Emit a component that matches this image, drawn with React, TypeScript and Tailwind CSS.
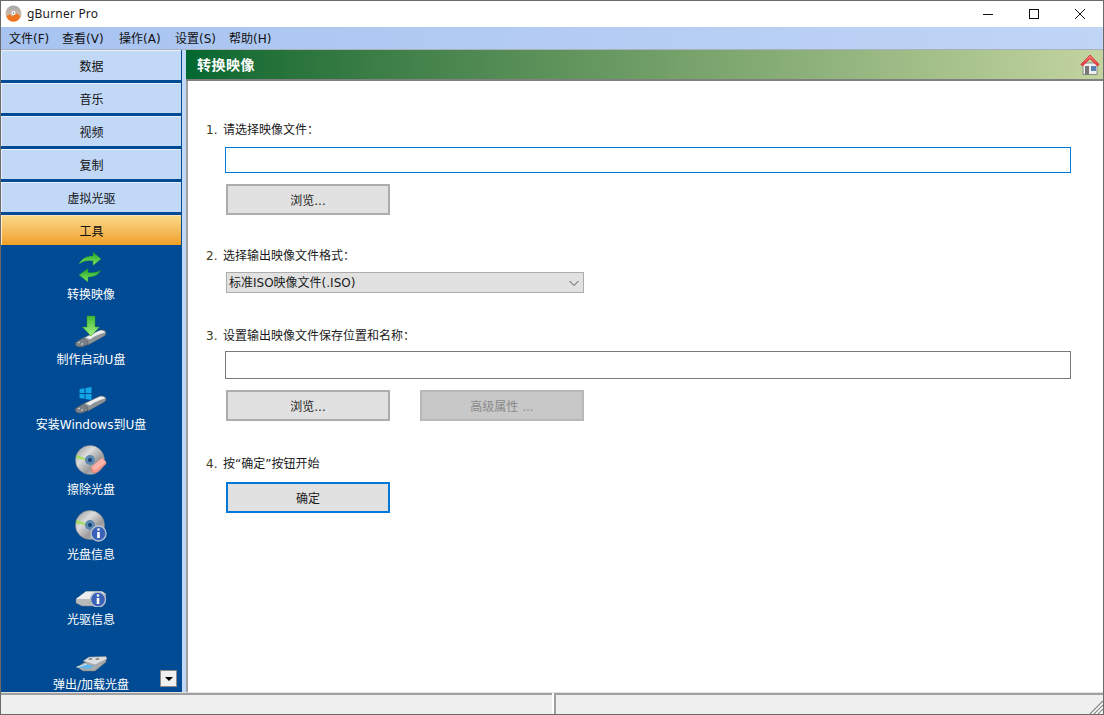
import { useId } from "react"

const font = { fontFamily: '"DejaVu Sans", "Noto Sans CJK SC", sans-serif' }

function AppIcon() {
  return (
    <svg width="17" height="17" viewBox="0 0 17 17" className="-mt-[2px]">
      <defs>
        <linearGradient id="appdisc" x1="0" y1="0" x2="0" y2="1">
          <stop offset="0" stopColor="#a8a8a8" />
          <stop offset="0.55" stopColor="#c9b9a9" />
          <stop offset="1" stopColor="#f5811e" />
        </linearGradient>
      </defs>
      <circle cx="8.500" cy="8.500" r="8" fill="url(#appdisc)" />
      <path d="M2 11l3-2 2 3 3-4 3 1 2 2-2 4-3 1.500H6L3 14z" fill="#f0701a" opacity="0.9" />
      <circle cx="8.500" cy="8" r="2.200" fill="#f4f4f4" />
      <circle cx="8.500" cy="8" r="0.800" fill="#888" />
    </svg>
  )
}

function HomeIcon() {
  return (
    <svg width="20" height="22" viewBox="0 0 20 22">
      <rect x="3" y="9" width="14" height="11.500" fill="#f0f0ee" stroke="#777" strokeWidth="0.8" />
      <rect x="5" y="12" width="4" height="8.500" fill="#777" />
      <rect x="11" y="12" width="5" height="5" fill="#5b82b5" />
      <path d="M10 1L1 10.500l1.500 1.500L10 4.500l7.500 7.500 1.500-1.500z" fill="#f0454a" stroke="#d02028" strokeWidth="0.8" />
      <path d="M10 1.500L3.500 8.500 10 3.500l6.500 5z" fill="#ff7d7d" />
    </svg>
  )
}

function ArrowsIcon() {
  const id = useId()
  return (
    <svg width="32" height="32" viewBox="0 0 32 32">
      <defs>
        <linearGradient id={id} x1="0" y1="0" x2="0" y2="1">
          <stop offset="0" stopColor="#1fa32a" />
          <stop offset="1" stopColor="#86ea62" />
        </linearGradient>
      </defs>
      <path d="M4 14C7 8 12 6 18 6L18 2 26 9 18 15.500 18 11C12 10 8 11 4 14z" fill={`url(#${id})`} stroke="#1c8f2a" strokeWidth="0.4" />
      <path d="M26 20C23 25 19 27 13 27L13 32 4 25 13 18.500 13 22.500C18 23 23 22.500 26 20z" fill={`url(#${id})`} stroke="#1c8f2a" strokeWidth="0.4" />
    </svg>
  )
}

function Usb({ y = 0 }: { y?: number }) {
  return (
    <g transform={`translate(0 ${y})`}>
      <path d="M8 23L24 15.500C27 14.200 31 15.500 31 18C31 20 29.500 21 27 22.300L13 30z" fill="#8f9499" stroke="#62686e" strokeWidth="0.5" />
      <path d="M10.500 22.500L24 16C26.500 15 30 15.800 30 17.500C26 18.500 20 20.500 15 24.500z" fill="#eceef0" />
      <path d="M0.500 27.500L8 23 13 26.500 13 29.500 7 32C4 32.500 0.500 31.500 0.500 29.500z" fill="#7a8086" stroke="#555" strokeWidth="0.5" />
      <path d="M3 28l2-1M6 29.500l2-1" stroke="#e0e2e4" strokeWidth="1" />
    </g>
  )
}

function UsbDownIcon() {
  const id = useId()
  return (
    <svg width="32" height="32" viewBox="0 0 32 32">
      <defs>
        <linearGradient id={id} x1="0" y1="0" x2="0" y2="1">
          <stop offset="0" stopColor="#3fbb35" />
          <stop offset="1" stopColor="#a4f080" />
        </linearGradient>
      </defs>
      <Usb />
      <path d="M12 1h8v11h4.500L16 21 7.500 12H12z" fill={`url(#${id})`} stroke="#2f9a2f" strokeWidth="0.5" />
    </svg>
  )
}

function UsbWinIcon() {
  return (
    <svg width="32" height="32" viewBox="0 0 32 32" overflow="visible">
      <Usb y={1} />
      <g fill="#12a5e8">
        <path d="M4.500 9l5-.8V13h-5zM10.500 8l6-1v6h-6z" />
        <path d="M4.500 14h5v4.800l-5-.8zM10.500 14h6v6l-6-1z" />
      </g>
    </svg>
  )
}

function Disc() {
  const id = useId()
  return (
    <g>
      <defs>
        <linearGradient id={id} x1="0" y1="0" x2="1" y2="1">
          <stop offset="0" stopColor="#8f9193" />
          <stop offset="0.35" stopColor="#dcdcdc" />
          <stop offset="0.65" stopColor="#9a9a9c" />
          <stop offset="1" stopColor="#e2e2e2" />
        </linearGradient>
      </defs>
      <circle cx="15" cy="15" r="14.500" fill={`url(#${id})`} stroke="#8a8a8a" strokeWidth="0.5" />
      <path d="M1.500 10l11 4-.5 1.500L1 13z" fill="#9adf4a" opacity="0.85" />
      <circle cx="15" cy="15" r="5" fill="#5f88b0" />
      <circle cx="15" cy="15" r="2" fill="#123f78" />
    </g>
  )
}

function InfoBadge({ cx, cy }: { cx: number; cy: number }) {
  return (
    <g>
      <circle cx={cx} cy={cy} r="7.500" fill="#3a62b8" stroke="#b8c0cc" strokeWidth="1.400" />
      <circle cx={cx} cy={cy - 4} r="1.300" fill="#fff" />
      <rect x={cx - 1.300} y={cy - 1.500} width="2.600" height="6" fill="#fff" />
    </g>
  )
}

function DiscEraseIcon() {
  return (
    <svg width="32" height="32" viewBox="0 0 32 32">
      <Disc />
      <path d="M16 22.500L27 13 31 17 31 19 21 28 17 27z" fill="#f79a90" stroke="#c46a60" strokeWidth="0.6" />
      <path d="M16 22.500L20.500 25 31 17 27 13z" fill="#fbb2a8" />
    </svg>
  )
}

function DiscInfoIcon() {
  return (
    <svg width="32" height="32" viewBox="0 0 32 32">
      <Disc />
      <InfoBadge cx={23.500} cy={23.500} />
    </svg>
  )
}

function DriveIcon() {
  return (
    <svg width="32" height="32" viewBox="0 0 32 32">
      <path d="M1 24L11 16.500H27L31 19 30 25 24 31H7L1 28z" fill="#b9bbbd" stroke="#787a7c" strokeWidth="0.5" />
      <path d="M1 24L11 16.500H27L30 18.500 20 24z" fill="#ecedee" />
      <path d="M15 28l2-3" stroke="#62c23a" strokeWidth="2" />
      <InfoBadge cx={23} cy={24.500} />
    </svg>
  )
}

function EjectIcon() {
  return (
    <svg width="32" height="32" viewBox="0 0 32 32">
      <path d="M2 27l10-6 19-4v5l-11 9H8z" fill="#a8aaac" stroke="#6e7072" strokeWidth="0.5" />
      <path d="M8 21l6-4 17-.5 1 2.500-12 6z" fill="#dcdedf" stroke="#808284" strokeWidth="0.4" />
      <path d="M13 19l3-1 2 1-3 1zM20 19l3-1 2 1-3 1z" fill="#777" />
      <path d="M1 27l10-3 8 2-5 3z" fill="#5fb5ee" />
      <path d="M1 27l10-3 1 .5-10 3z" fill="#f4f4f4" />
    </svg>
  )
}

const tabs = ["数据", "音乐", "视频", "复制", "虚拟光驱"]

const tools = [
  { icon: ArrowsIcon, label: "转换映像" },
  { icon: UsbDownIcon, label: "制作启动U盘" },
  { icon: UsbWinIcon, label: "安装Windows到U盘" },
  { icon: DiscEraseIcon, label: "擦除光盘" },
  { icon: DiscInfoIcon, label: "光盘信息" },
  { icon: DriveIcon, label: "光驱信息" },
  { icon: EjectIcon, label: "弹出/加载光盘" },
]

const menus = [
  { text: "文件(F)", width: "w-[53px]" },
  { text: "查看(V)", width: "w-[57px]" },
  { text: "操作(A)", width: "w-[56px]" },
  { text: "设置(S)", width: "w-[54px]" },
  { text: "帮助(H)", width: "w-[50px]" },
]

function StepLabel({ n, text, className }: { n: number; text: string; className: string }) {
  return (
    <div className={`flex h-4 items-center pt-[2px] text-[12px] leading-4 text-[#1a1a1a] ${className}`}>
      <span className="w-[17px] text-[#3a3a1a]">{n}.</span>
      <span>{text}</span>
    </div>
  )
}

function GrayButton({ text, disabled, className = "" }: { text: string; disabled?: boolean; className?: string }) {
  return (
    <button
      className={`flex h-[31px] w-[164px] items-center justify-center border-2 pt-[2px] text-[12px] ${
        disabled ? "border-[#b8b8b8] bg-[#c8c8c8] text-[#8a8a8a]" : "border-[#adadad] bg-[#e1e1e1] text-[#1a1a1a]"
      } ${className}`}
    >
      {text}
    </button>
  )
}

export default function App() {
  return (
    <div className="flex h-[715px] w-[1104px] flex-col overflow-hidden border border-[#6a6a6a] bg-white" style={font}>
      {/* Title bar */}
      <div className="flex h-[26px] shrink-0 items-center bg-white pl-[4px]">
        <AppIcon />
        <span className="ml-[5px] text-[12px] tracking-[0.2px] text-[#1a1a1a]" style={{ fontFamily: '"Noto Sans", sans-serif' }}>
          gBurner Pro
        </span>
        <div className="ml-auto flex h-full items-center">
          <svg width="46" height="26" viewBox="0 0 46 26">
            <path d="M18 13.500h10" stroke="#111" strokeWidth="1" />
          </svg>
          <svg width="46" height="26" viewBox="0 0 46 26">
            <rect x="18.500" y="8.500" width="9" height="9" fill="none" stroke="#111" strokeWidth="1" />
          </svg>
          <svg width="46" height="26" viewBox="0 0 46 26">
            <path d="M18 8l10 10M28 8L18 18" stroke="#111" strokeWidth="1" />
          </svg>
        </div>
      </div>

      {/* Menu */}
      <div className="flex h-[22px] shrink-0 items-center bg-gradient-to-r from-[#a7c3f0] to-[#c0d5f6] pt-[2px] pl-[8px] text-[12px] text-[#111]">
        {menus.map((m) => (
          <span key={m.text} className={`whitespace-nowrap ${m.width}`}>
            {m.text}
          </span>
        ))}
      </div>
      <div className="h-px shrink-0 bg-[#a8b0bc]" />

      <div className="flex min-h-0 flex-1">
        {/* Left accordion */}
        <div className="relative flex w-[181px] shrink-0 flex-col overflow-hidden bg-[#004b93]">
          {tabs.map((t) => (
            <div key={t} className="mr-px mb-[3px] flex h-[30px] shrink-0 items-center justify-center border-t border-l border-white/60 bg-[#c2d8f7] pt-[2px] text-[12px] text-[#111]">
              {t}
            </div>
          ))}
          <div className="mr-px flex h-[30px] shrink-0 items-center justify-center border-t border-l border-white/70 bg-gradient-to-b from-[#f9d985] to-[#f09f22] pt-[2px] text-[12px] text-[#111]">
            工具
          </div>
          <div className="flex flex-col items-center pt-[5px] pr-px">
            {tools.map((t) => (
              <div key={t.label} className="flex h-[65px] shrink-0 flex-col items-center">
                <t.icon />
                <span className="mt-[5px] h-4 text-[12px] leading-4 whitespace-nowrap text-white">{t.label}</span>
              </div>
            ))}
          </div>
          <button className="absolute right-[5px] bottom-[5px] flex h-[17px] w-[17px] items-center justify-center border border-[#8a8a8a] bg-[#f0f0f0]">
            <span className="h-0 w-0 border-x-[4px] border-t-[4px] border-x-transparent border-t-black" />
          </button>
        </div>
        <div className="w-[4px] shrink-0 bg-[#c2d8f7]" />

        {/* Main panel */}
        <div className="flex min-w-0 flex-1 flex-col">
          <div className="flex h-[29px] shrink-0 items-center justify-between bg-gradient-to-r from-[#006830] to-[#c3d4a0] pt-px pr-[3px] pl-[11px]">
            <span className="text-[14px] font-bold tracking-[0.5px] text-white">转换映像</span>
            <HomeIcon />
          </div>
          <div className="h-[2px] shrink-0 bg-[#808080]" />
          <div className="flex min-h-0 flex-1 flex-col border-l-2 border-[#a0a0a0] bg-white pl-[18px]">
            <StepLabel n={1} text="请选择映像文件：" className="mt-[40px]" />
            <div className="mt-[10px] mr-[32px] ml-[19px] h-[26px] border border-[#0078d7] bg-white" />
            <GrayButton text="浏览..." className="mt-[11px] ml-[20px]" />

            <StepLabel n={2} text="选择输出映像文件格式：" className="mt-[32px]" />
            <div className="mt-[9px] ml-[20px] flex h-[21px] w-[358px] items-center justify-between border border-[#adadad] bg-[#e1e1e1] pt-px pr-[3px] pl-[2px] text-[12px] text-[#1a1a1a]">
              <span>标准ISO映像文件(.ISO)</span>
              <svg width="12" height="12" viewBox="0 0 12 12">
                <path d="M1.500 4l4.500 4.500L10.500 4" fill="none" stroke="#555" strokeWidth="1" />
              </svg>
            </div>

            <StepLabel n={3} text="设置输出映像文件保存位置和名称：" className="mt-[34px]" />
            <div className="mt-[8px] mr-[32px] ml-[19px] h-[28px] border border-[#7a7a7a] bg-white" />
            <div className="mt-[11px] ml-[20px] flex gap-[30px]">
              <GrayButton text="浏览..." />
              <GrayButton text="高级属性 ..." disabled />
            </div>

            <StepLabel n={4} text="按“确定”按钮开始" className="mt-[34px]" />
            <GrayButton text="确定" className="mt-[11px] ml-[20px] !border-[#0078d7]" />
          </div>
        </div>
      </div>

      {/* Status bar */}
      <div className="flex h-[22px] shrink-0 border-t border-[#e0e0e0] bg-white">
        <div className="w-[551px] border-t-2 border-[#a0a0a0] bg-[#efefef]" />
        <div className="w-[2px]" />
        <div className="relative flex-1 border-t-2 border-l-2 border-[#a0a0a0] bg-[#efefef]">
          <svg width="14" height="14" viewBox="0 0 14 14" className="absolute right-0 bottom-0">
            <path d="M14 1L1 14M14 5L5 14M14 9L9 14" stroke="#8a8a8a" strokeWidth="1.400" />
            <path d="M14 3L3 14M14 7L7 14M14 11L11 14" stroke="#fff" strokeWidth="1.200" />
          </svg>
        </div>
      </div>
    </div>
  )
}
